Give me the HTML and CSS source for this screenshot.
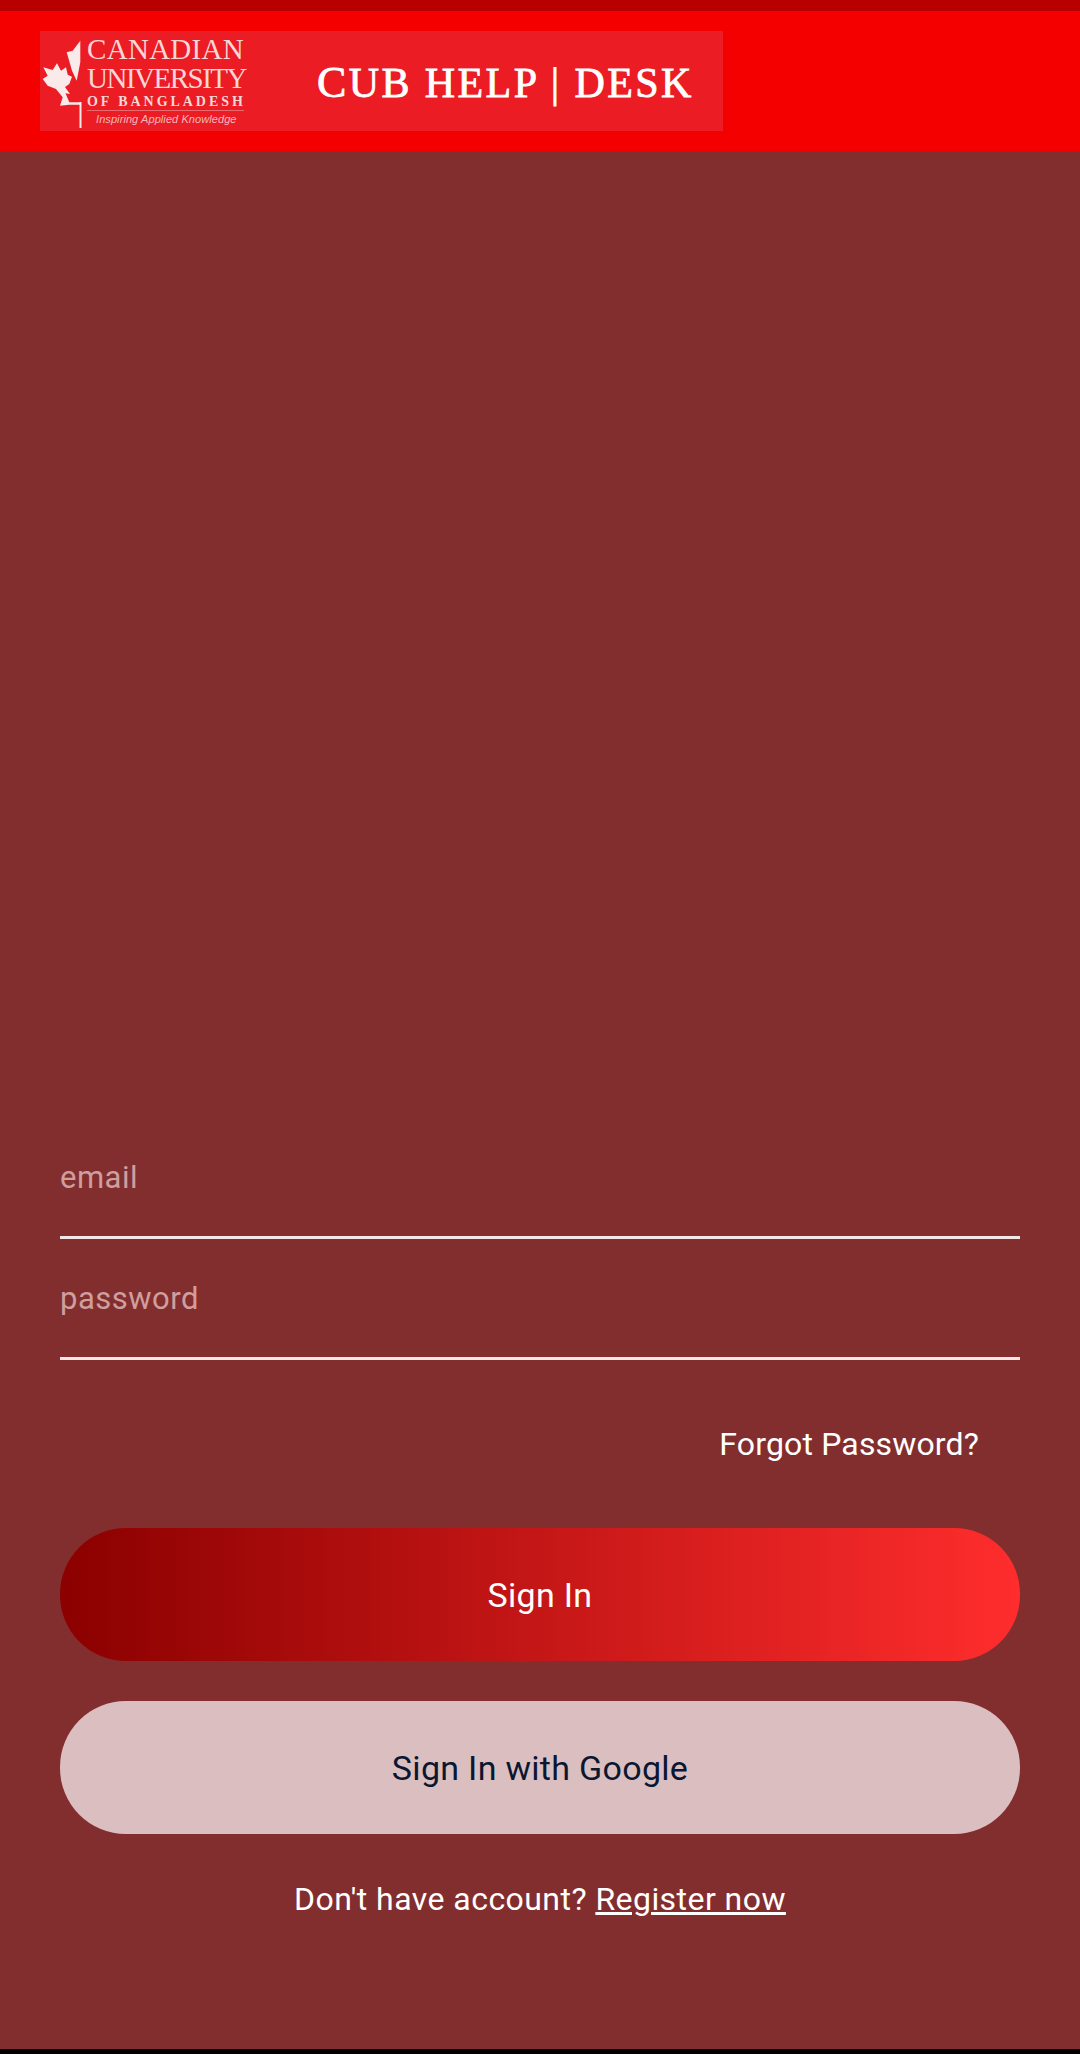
FILE: index.html
```html
<!DOCTYPE html>
<html lang="en">
<head>
<meta charset="utf-8">
<title>CUB Help Desk</title>
<link rel="stylesheet" href="styles.css">
</head>
<body>
<div class="status"></div>
<header class="header">
  <div class="logo">
    <svg class="leaf" viewBox="0 0 40 90" width="40" height="90" aria-hidden="true">
      <path class="leaf-fill" d="M38.3 .7 L38.3 22.3 L34.7 40.7 L30 30.7 L24.7 12.3 L30.7 10.7 Z"/>
      <path class="leaf-fill" d="M15 23.3 L19 30.7 L24 27.3 L25.7 34.7 L30 36.7 L27.3 44 L23 47 L28 54 L23.5 53.3 L27.3 62.3 L38.3 62.3 L38.3 64.7 L27.3 64.7 L18 65.7 L20.7 57.3 L14 49 L5.7 45.7 L.7 39 L5.7 35.7 L1.3 27.3 L10.7 30 Z"/>
      <rect class="leaf-fill" x="37.5" y="62" width="2" height="26"/>
    </svg>
    <div class="wordmark">
      <span class="wm-line wm-canadian">CANADIAN</span>
      <span class="wm-line wm-university">UNIVERSITY</span>
      <span class="wm-line wm-bangladesh">OF BANGLADESH</span>
      <span class="wm-line wm-tag">Inspiring Applied Knowledge</span>
    </div>
    <div class="logo-title"><span class="cap">C</span>UB HELP | DESK</div>
  </div>
</header>
<main class="main">
  <form class="form">
    <input class="field" type="text" placeholder="email">
    <input class="field" type="password" placeholder="password">
    <a class="forgot">Forgot Password?</a>
    <button class="btn btn-primary" type="button">Sign In</button>
    <button class="btn btn-google" type="button">Sign In with Google</button>
    <p class="register">Don't have account? <a class="register-link">Register now</a></p>
  </form>
</main>
<div class="bottom"></div>
</body>
</html>
```
FILE: styles.css
```css
* { box-sizing: border-box; }
html, body { margin: 0; padding: 0; }
body {
  width: 1080px;
  height: 2054px;
  display: flex;
  flex-direction: column;
  background: #832e2e;
  font-family: Roboto, sans-serif;
  overflow: hidden;
}
.status { height: 11px; background: #b80000; flex: none; }
.header { height: 140px; flex: none; background: #f40000; padding: 20px 40px; }
.logo {
  width: 683px;
  height: 100px;
  background: #ec1c24;
  display: flex;
  align-items: flex-start;
  color: #fff;
  font-family: "Liberation Serif", serif;
}
.leaf { flex: none; margin: 9px 0 0 2px; }
.leaf-fill { fill: #fbeaea; }
.wordmark { width: 157px; margin: 4px 0 0 5px; display: flex; flex-direction: column; flex: none; color: #f7d6d6; }
.wm-line { display: block; white-space: nowrap; }
.wm-canadian { font-size: 29px; line-height: 29px; letter-spacing: 0.3px; }
.wm-university { font-size: 29px; line-height: 29px; letter-spacing: -1.5px; }
.wm-bangladesh { font-size: 14px; line-height: 16px; font-weight: 700; letter-spacing: 2.95px; border-bottom: 1px solid #e96a6e; margin-top: 1px; }
.wm-tag { font-size: 11px; line-height: 14px; font-style: italic; font-family: "Liberation Sans", sans-serif; margin: 1px 0 0 9px; letter-spacing: 0.08px; color: #f4b8ba; }
.logo-title { margin: 29px 0 0 73px; font-size: 42px; line-height: 46px; white-space: nowrap; letter-spacing: 2.4px; -webkit-text-stroke: 0.8px #fff; }
.logo-title .cap { font-size: 44px; }
.main { flex: 1; display: flex; flex-direction: column; justify-content: flex-end; }
.form { padding: 0 60px 128px; display: flex; flex-direction: column; }
.field {
  display: block;
  width: 100%;
  height: 86px;
  padding: 0 0 34px;
  background: transparent;
  border: 0;
  border-bottom: 3px solid #f2e6e6;
  font: 400 31px Roboto, sans-serif;
  letter-spacing: 0.5px;
  color: #fff;
  outline: 0;
}
.field + .field { margin-top: 35px; }
.field::placeholder { color: #cf9e9e; opacity: 1; }
.forgot { align-self: flex-end; margin: 62px 41px 0 0; font-size: 32px; line-height: 44px; letter-spacing: 0.15px; color: #fff; }
.btn {
  display: block;
  width: 100%;
  height: 133px;
  border: 0;
  border-radius: 66px;
  font: 400 34px Roboto, sans-serif;
  letter-spacing: 0.3px;
}
.btn-primary { margin-top: 62px; color: #fff; background: linear-gradient(90deg, #8b0000, #ff2d2d); }
.btn-google { margin-top: 40px; color: #0b1730; background: #dbbfc0; }
.register { margin: 43px 0 0; text-align: center; font-size: 32px; line-height: 44px; letter-spacing: 0.45px; color: #fff; }
.register-link { text-decoration: underline; }
.bottom { height: 5px; flex: none; background: #000; }
```
